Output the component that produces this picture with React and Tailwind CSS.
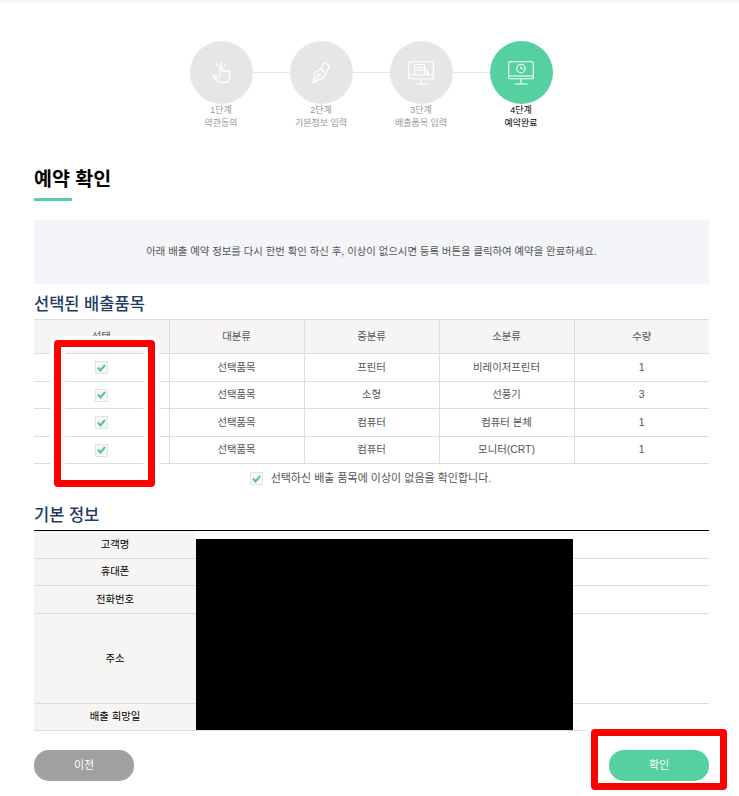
import React from 'react';

const FONT = "font-['Liberation_Sans','Noto_Sans_CJK_KR',sans-serif]";

const HandIcon = () => (
  <svg width="19" height="23" viewBox="0 0 26 30" fill="none" stroke="white" strokeWidth="1.7" strokeLinejoin="round" strokeLinecap="round">
    <path d="M8 22 L3.5 18.5 C1.5 17.5 0.5 20 2 21 L7 26 C9 28.5 11 29 15 29 C21 29 24.5 27 24.5 22 L24.5 15 C24.5 12.5 21.5 12.5 21 14.5 C21 12 18 12 17.5 14 C17.5 11.5 14.5 11.5 14 13.5 L14 8 C14 5.5 10.5 5.5 10.5 8 L10.5 21" />
    <path d="M12.2 4 L12.2 1 M7.5 5 L6 3 M17 5 L18.5 3" />
  </svg>
);

const PenIcon = () => (
  <svg width="18" height="23" viewBox="0 0 26 32" fill="none" stroke="white" strokeWidth="1.7" strokeLinejoin="round" strokeLinecap="round">
    <path d="M1.5 30.5 L4.5 16 L12.5 11 L20 17 L17 23 Z" />
    <path d="M12.5 11 L18 1.5 L25 7 L20 17" />
    <path d="M1.5 30.5 L8.5 21.5" />
    <circle cx="10" cy="19.5" r="2" />
  </svg>
);

const FormIcon = () => (
  <svg width="26" height="24" viewBox="0 0 26 24" fill="none" stroke="white" strokeWidth="1.1" strokeLinejoin="round" strokeLinecap="round">
    <rect x="0.7" y="0.7" width="24.6" height="17" rx="1" />
    <path d="M0.7 14 L25.3 14 M13 18 L13 22.5 M7 23 L19 23" />
    <path d="M6.5 14 L6.5 3.5 L16.5 3.5 L16.5 14" />
    <path d="M9 6.5 L15 6.5 M9 9 L15 9" />
    <path d="M18 8 L21 13 L19.5 13.5 Z" fill="white" />
  </svg>
);

const ClockIcon = () => (
  <svg width="26" height="24" viewBox="0 0 26 24" fill="none" stroke="white" strokeWidth="1.1" strokeLinejoin="round" strokeLinecap="round">
    <rect x="0.7" y="0.7" width="24.6" height="17" rx="1" />
    <path d="M0.7 15 L25.3 15 M13 18 L13 22.5 M7 23 L19 23" />
    <circle cx="13" cy="7.5" r="4.2" />
    <path d="M13 5.5 L13 7.8 L15 7.8" />
  </svg>
);

const Step = ({ icon, label, name, active }) => (
  <div className="flex w-[63px] flex-col items-center">
    <div className={`flex h-[63px] w-[63px] items-center justify-center rounded-full ${active ? 'bg-[#55d0a0]' : 'bg-[#e6e6e6]'}`}>
      {icon}
    </div>
    <p className={`whitespace-nowrap text-center text-[9px] leading-[13px] ${active ? 'text-black' : 'text-[#999999]'}`}>
      {label}
      <br />
      {name}
    </p>
  </div>
);

const Check = () => (
  <span className="flex h-[13px] w-[13px] items-center justify-center border border-[#e2e2e2] bg-[#f8f8f8]">
    <svg width="9" height="8" viewBox="0 0 9 8" fill="none" stroke="#55c49c" strokeWidth="2">
      <path d="M1 3.5 L3.5 6.5 L8 1" />
    </svg>
  </span>
);

const items = [
  { h: 'h-[28px]', mid: '프린터', sub: '비레이저프린터', qty: 1 },
  { h: 'h-[27px]', mid: '소형', sub: '선풍기', qty: 3 },
  { h: 'h-[28px]', mid: '컴퓨터', sub: '컴퓨터 본체', qty: 1 },
  { h: 'h-[27px]', mid: '컴퓨터', sub: '모니터(CRT)', qty: 1 },
];

const info = [
  { h: 'h-[28px]', label: '고객명' },
  { h: 'h-[27px]', label: '휴대폰' },
  { h: 'h-[28px]', label: '전화번호' },
  { h: 'h-[90px]', label: '주소' },
  { h: 'h-[27px]', label: '배출 희망일' },
];

const App = () => {
  return (
    <div className={`${FONT} relative h-[796px] w-[739px] overflow-hidden bg-white`}>
      <div className="h-[3px] bg-[#f3f5f9]" />

      <div className="relative mt-[38px] flex justify-center pl-[3px]">
        <div className="absolute left-[220px] top-[31px] h-px w-[300px] bg-[#e6e6e6]" />
        <div className="relative flex gap-[37px]">
          <Step icon={<HandIcon />} label="1단계" name="약관동의" />
          <Step icon={<PenIcon />} label="2단계" name="기본정보 입력" />
          <Step icon={<FormIcon />} label="3단계" name="배출품목 입력" />
          <Step icon={<ClockIcon />} label="4단계" name="예약완료" active />
        </div>
      </div>

      <div className="pl-[34px] pr-[30px]">
        <h1 className="mt-[36px] text-[19.5px] font-bold leading-[26px] text-black">예약 확인</h1>
        <div className="mt-[6px] h-[3px] w-[38px] bg-[#55d0a0]" />

        <div className="mt-[19px] flex h-[64px] w-[675px] items-center justify-center bg-[#f3f5f9] text-[10.4px] text-[#555555]">
          아래 배출 예약 정보를 다시 한번 확인 하신 후, 이상이 없으시면 등록 버튼을 클릭하여 예약을 완료하세요.
        </div>

        <h2 className="mt-[10px] text-[16.5px] font-medium leading-[20px] text-[#1f3a63]">선택된 배출품목</h2>

        <table className="mt-[5px] w-[675px] table-fixed border-collapse text-center text-[10.4px] text-[#555555]">
          <thead>
            <tr className="h-[34px] border-y border-[#dddddd] bg-[#f6f5f3]">
              <th className="border-r border-[#dddddd] font-normal">선택</th>
              <th className="border-r border-[#dddddd] font-normal">대분류</th>
              <th className="border-r border-[#dddddd] font-normal">중분류</th>
              <th className="border-r border-[#dddddd] font-normal">소분류</th>
              <th className="font-normal">수량</th>
            </tr>
          </thead>
          <tbody>
            {items.map((item, i) => (
              <tr key={i} className={`${item.h} border-b border-[#dddddd]`}>
                <td className="border-r border-[#dddddd]">
                  <span className="flex justify-center"><Check /></span>
                </td>
                <td className="border-r border-[#dddddd]">선택품목</td>
                <td className="border-r border-[#dddddd]">{item.mid}</td>
                <td className="border-r border-[#dddddd]">{item.sub}</td>
                <td>{item.qty}</td>
              </tr>
            ))}
          </tbody>
        </table>

        <div className="mt-[8px] flex items-center justify-center gap-[8px] pr-[2px] text-[11px] leading-[13px] text-[#555555]">
          <Check />
          <span>선택하신 배출 품목에 이상이 없음을 확인합니다.</span>
        </div>

        <h2 className="mt-[20px] text-[16.5px] font-medium leading-[20px] text-[#1f3a63]">기본 정보</h2>

        <div className="relative mt-[5px] w-[675px] border-t border-black">
          {info.map((row) => (
            <div key={row.label} className={`${row.h} flex border-b border-[#dddddd] text-[10.4px] text-black`}>
              <div className="flex w-[162px] items-center justify-center bg-[#f6f5f3]">{row.label}</div>
            </div>
          ))}
          {/* redacted block */}
          <div className="absolute left-[162px] top-[8px] h-[191px] w-[377px] bg-black" />
        </div>

        <div className="mt-[19px] flex justify-between">
          <button className="h-[31px] w-[100px] rounded-[15px] bg-[#a0a0a0] text-[11px] text-white">이전</button>
          <button className="h-[31px] w-[100px] rounded-[15px] bg-[#55d0a0] text-[11px] text-white">확인</button>
        </div>
      </div>

      {/* red annotation boxes */}
      <div className="absolute left-[54px] top-[340px] h-[147px] w-[101px] rounded-[4px] border-[7px] border-[#ff0000] shadow-[0_0_0_4px_#ffffff,inset_0_0_0_4px_#ffffff]" />
      <div className="absolute left-[591px] top-[729px] h-[61px] w-[136px] rounded-[4px] border-[7px] border-[#ff0000] shadow-[0_0_0_4px_#ffffff]" />
    </div>
  );
};

export default App;
